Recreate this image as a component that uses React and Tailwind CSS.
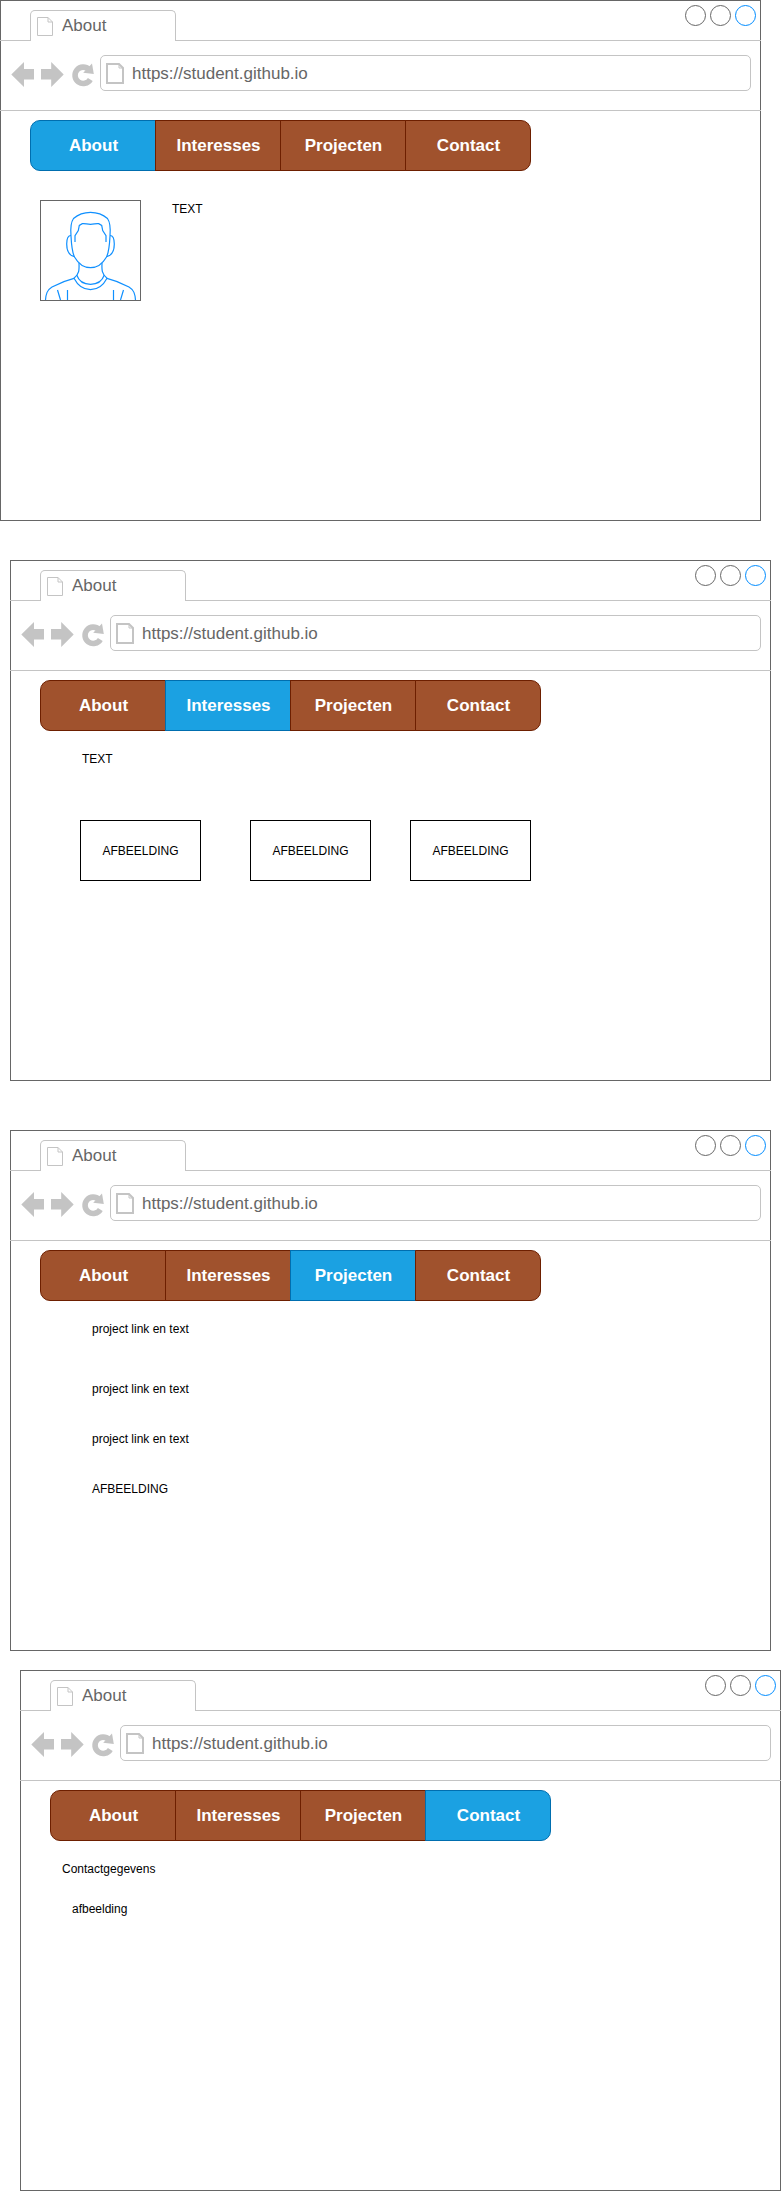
const TABS = ["About", "Interesses", "Projecten", "Contact"];

const TAB_STYLE = {
  About: "w-[126px] rounded-l-[10px]",
  Interesses: "-ml-px w-[126px]",
  Projecten: "-ml-px w-[126px]",
  Contact: "-ml-px w-[126px] rounded-r-[10px]",
};

function PageIcon({ className, width, height, stroke }) {
  return (
    <svg className={className} width={width} height={height} viewBox={`0 0 ${width} ${height}`} fill="none" stroke="#c4c4c4" strokeWidth={stroke}>
      <path d={`M${stroke / 2} ${stroke / 2}H${width - 5}L${width - stroke / 2} 5V${height - stroke / 2}H${stroke / 2}Z`} />
      <path d={`M${width - 5} ${stroke / 2}V5H${width - stroke / 2}`} strokeWidth="1" />
    </svg>
  );
}

function NavIcons() {
  return (
    <svg className="mt-[21px] ml-[10px] shrink-0" width="85" height="26" viewBox="10 62 85 26" fill="#c4c4c4">
      <path d="M11.3 74.5L24 62V69H34V79.5H24V87Z" />
      <path d="M63.7 74.5L51.2 62V69H41V79.5H51.2V87Z" />
      <path d="M89 69.5A8.2 8.2 0 1 0 90.300 79.5" fill="none" stroke="#c4c4c4" strokeWidth="5.6" />
      <path d="M92 63.500L93.800 74L83.2 72.7Z" />
    </svg>
  );
}

function NavBar({ active }) {
  return (
    <nav className="mt-[9px] ml-[29px] flex h-[51px] w-[501px]">
      {TABS.map((tab) => (
        <div
          key={tab}
          className={`flex shrink-0 items-center justify-center border pt-[2px] pl-px text-[17px] font-bold text-white ${TAB_STYLE[tab]} ${
            tab === active ? "border-[#006eaf] bg-[#1ba1e2]" : "border-[#6d1f00] bg-[#a0522d]"
          }`}
        >
          {tab}
        </div>
      ))}
    </nav>
  );
}

function BrowserWindow({ active, className = "", children }) {
  return (
    <section className={`h-[521px] w-[761px] border border-[#666666] text-xs ${className}`}>
      <div className="-mx-px flex h-10 items-start border-b border-[#c4c4c4]">
        <div className="mt-[9px] ml-[30px] flex h-[31px] w-[146px] items-start rounded-t-[5px] border border-b-0 border-[#c4c4c4] bg-white">
          <PageIcon className="mt-[6px] ml-[6px]" width={16} height={19} stroke={1} />
          <span className="mt-[5px] ml-[9px] text-[17px] leading-[19px] text-[#666666]">About</span>
        </div>
        <div className="mt-1 mr-[5px] ml-auto flex gap-1">
          <span className="size-[21px] rounded-full border border-[#666666]" />
          <span className="size-[21px] rounded-full border border-[#666666]" />
          <span className="size-[21px] rounded-full border border-[#008cff]" />
        </div>
      </div>
      <div className="-mx-px flex h-[70px] items-start border-b border-[#c4c4c4]">
        <NavIcons />
        <div className="mt-[14px] ml-[5px] flex h-[36px] w-[651px] items-start rounded-[5px] border border-[#c4c4c4]">
          <PageIcon className="mt-[7px] ml-[5px]" width={18} height={21} stroke={2} />
          <span className="mt-[8px] ml-[8px] text-[17px] leading-[19px] text-[#666666]">https://student.github.io</span>
        </div>
      </div>
      <NavBar active={active} />
      {children}
    </section>
  );
}

function Portrait() {
  return (
    <svg className="size-[101px] border border-[#666666]" viewBox="41 201 99 99" fill="none" stroke="#1090ff" strokeWidth="1.2">
      <path d="M71 236C70.500 230 71 222 73.500 218.500C78 214.500 84 212.300 90.500 212.300C97 212.300 103 214.500 107.500 218.500C110 222 110.500 230 110 236" />
      <path d="M71 236C71.500 246 72 252 74.500 257C78.500 264 84 267.700 90.500 267.700C97 267.700 102.500 264 106.500 257C109 252 109.500 246 110 236" />
      <path d="M71 235.500C68 235.500 66.700 239 66.700 244C66.700 251 69 255.500 74.500 256.700" />
      <path d="M110 235.500C113 235.500 114.300 239 114.300 244C114.300 251 112 255.500 106.500 256.700" />
      <path d="M75 242V235.700L78.300 230.500L79.300 225.500L82.300 223.700C85 223.300 87 224.300 90.500 224.300C94 224.300 96 223.300 98.700 223.700L101.700 225.500L102.700 230.500L106 235.700V242" />
      <path d="M79 263C79.300 270 79.300 274 74 278.300C78 286 83 289.700 90.500 289.700C98 289.700 103 286 107 278.300C101.700 274 101.700 270 102 263" />
      <path d="M76.700 275C79 281.500 84 284.300 90.500 284.300C97 284.300 102 281.500 104.300 275" />
      <path d="M74 278.300C65 280.500 57 284.300 52 287C47 290 46 294 45.500 300" />
      <path d="M107 278.300C116 280.500 124 284.300 129 287C134 290 135 294 135.500 300" />
      <path d="M57.500 290L60.500 300M67.500 290V300M123.500 290L120.500 300M113.500 290V300" />
    </svg>
  );
}

function ImageBox({ className = "" }) {
  return (
    <div className={`flex h-[61px] w-[121px] items-center justify-center border border-black ${className}`}>AFBEELDING</div>
  );
}

export default function App() {
  return (
    <main className="h-[2191px] w-[781px] bg-white font-['Liberation_Sans',Arial,sans-serif] leading-[14px] text-black">
      <BrowserWindow active="About">
        <div className="mt-[29px] ml-[39px] flex items-start">
          <Portrait />
          <p className="mt-[2px] ml-[31px] leading-[14px]">TEXT</p>
        </div>
      </BrowserWindow>

      <BrowserWindow active="Interesses" className="mt-[39px] ml-[10px]">
        <p className="mt-[21px] ml-[71px] leading-[14px]">TEXT</p>
        <div className="mt-[54px] ml-[69px] flex">
          <ImageBox />
          <ImageBox className="ml-[49px]" />
          <ImageBox className="ml-[39px]" />
        </div>
      </BrowserWindow>

      <BrowserWindow active="Projecten" className="mt-[49px] ml-[10px]">
        <div className="mt-[21px] ml-[81px] leading-[14px]">
          <p>project link en text</p>
          <p className="mt-[46px]">project link en text</p>
          <p className="mt-[36px]">project link en text</p>
          <p className="mt-[36px]">AFBEELDING</p>
        </div>
      </BrowserWindow>

      <BrowserWindow active="Contact" className="mt-[19px] ml-[20px]">
        <div className="mt-[21px] ml-[41px] leading-[14px]">
          <p>Contactgegevens</p>
          <p className="mt-[26px] ml-[10px]">afbeelding</p>
        </div>
      </BrowserWindow>
    </main>
  );
}
